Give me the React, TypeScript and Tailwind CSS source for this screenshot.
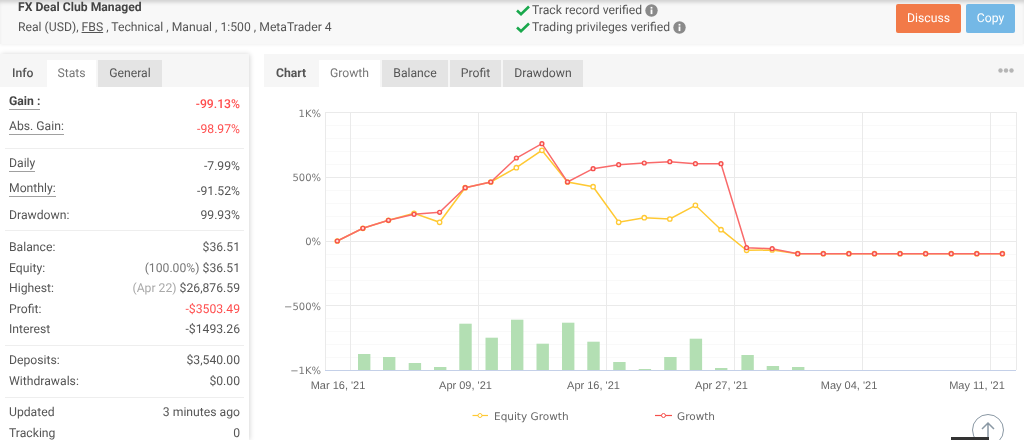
import React from "react";

const redY = [241, 228.3, 220.3, 214.3, 212.3, 187.7, 182, 158, 143.7, 182, 168.7, 164.7, 163, 161.7, 163.7, 163.7, 247.7, 248.7, 253.7, 253.7, 253.7, 253.7, 253.7, 253.7, 253.7, 253.7, 253.7];
const yelY = [241, 228.3, 220.3, 213.3, 222.3, 187.7, 182, 167.7, 150.3, 182, 186.7, 222.3, 217.7, 219, 205.3, 229.7, 250.3, 250, 253.7, 253.7, 253.7, 253.7, 253.7, 253.7, 253.7, 253.7, 253.7];
const xs = redY.map((_, i) => 337.3 + i * 25.58);
const bars: [number, number][] = [[358, 354], [383, 357], [408.7, 363], [434, 367], [459.3, 323.7], [485.5, 337.7], [511, 319.7], [536.5, 343.7], [562, 322.7], [587.3, 341.7], [613.2, 362], [638.7, 369], [664.2, 357], [689.7, 338.7], [715, 368], [741.4, 355], [766.7, 366], [792, 367]];
const verticals = [325.5, 350.5, 478.5, 606.5, 734.5, 862.5, 990.5, 1016.5];
const majors = [112.5, 177.5, 241.5, 305.5];
const minors = [125, 138, 151, 164, 190, 203, 216, 229, 254, 267, 280, 293, 318, 331, 344, 357];
const xLabels: [string, number][] = [["Mar 16, '21", 338], ["Apr 09, '21", 465.5], ["Apr 16, '21", 593.5], ["Apr 27, '21", 721.5], ["May 04, '21", 849], ["May 11, '21", 977]];
const yLabels: [string, number][] = [["1K%", 116.5], ["500%", 181], ["0%", 245], ["−500%", 309.5], ["−1K%", 374]];

function pts(ys: number[]) {
  return ys.map((y, i) => `${xs[i].toFixed(1)},${y}`).join(" ");
}

function Chart() {
  const axis = { fontFamily: "'Liberation Sans', Arial, sans-serif", fontSize: 11, fill: "#666" };
  const yAxis = { fontFamily: "'DejaVu Sans', sans-serif", fontSize: 10, fill: "#777" };
  const legend = { fontFamily: "'DejaVu Sans', sans-serif", fontSize: 10.5, fill: "#666" };
  return (
    <svg width="760" height="353" viewBox="264 87 760 353" className="block">
      {minors.map((y) => (
        <line key={y} x1="325" x2="1016" y1={y + 0.5} y2={y + 0.5} stroke="#f9f9f9" />
      ))}
      {majors.map((y) => (
        <line key={y} x1="325" x2="1016" y1={y} y2={y} stroke="#eaeaea" />
      ))}
      {verticals.map((x) => (
        <line key={x} x1={x} x2={x} y1="112" y2="370" stroke="#eaeaea" />
      ))}
      {bars.map(([x, top]) => (
        <rect key={x} x={x} y={top} width="12.4" height={370 - top} fill="#b3dfb3" />
      ))}
      <line x1="325" x2="1016" y1="370.5" y2="370.5" stroke="#c4d0e8" />
      <polyline points={pts(yelY)} fill="none" stroke="#ffc933" strokeWidth="1.5" />
      {yelY.map((y, i) => (
        <circle key={i} cx={xs[i]} cy={y} r="2.2" fill="#fff" stroke="#ffc933" strokeWidth="1.3" />
      ))}
      <polyline points={pts(redY)} fill="none" stroke="#f96a6a" strokeWidth="1.5" />
      {redY.map((y, i) => (
        <circle key={i} cx={xs[i]} cy={y} r="1.9" fill="#fdd" stroke="#f6504c" strokeWidth="1.4" />
      ))}
      <g style={yAxis} textAnchor="end">
        {yLabels.map(([t, y]) => (
          <text key={t} x="321" y={y}>{t}</text>
        ))}
      </g>
      <g style={axis} textAnchor="middle">
        {xLabels.map(([t, x]) => (
          <text key={t} x={x} y="389">{t}</text>
        ))}
      </g>
      <line x1="472.5" x2="488" y1="415.5" y2="415.5" stroke="#ffc933" strokeWidth="1.2" />
      <circle cx="480" cy="415.5" r="2" fill="#fff" stroke="#ffc933" />
      <text x="494" y="419.5" style={legend}>Equity Growth</text>
      <line x1="655" x2="672" y1="415.5" y2="415.5" stroke="#f6504c" strokeWidth="1.2" />
      <circle cx="663.5" cy="415.5" r="2" fill="#fff" stroke="#f6504c" />
      <text x="677" y="419.5" style={legend}>Growth</text>
    </svg>
  );
}

type RowProps = { label: string; value: string; note?: string; noteLight?: boolean; under?: boolean; bold?: boolean; red?: boolean; tall?: boolean };

function Row({ label, value, note, noteLight, under, bold, red, tall }: RowProps) {
  return (
    <div className={`flex justify-between items-center pl-[9px] pr-[9px] ${tall ? "h-[25px]" : "h-[20.4px]"}`}>
      <span className={`${under ? "border-b border-[#a0a0a0] leading-[15px] mb-[4px]" : ""} ${bold ? "font-bold text-[#444]" : ""}`}>{label}</span>
      <span className={`${red ? "text-[#ff4d4d]" : ""} ${bold ? "font-medium text-[#ff3d3d]" : ""}`}>
        {note && <span className={noteLight ? "text-[#aaa]" : "text-[#777]"}>{note} </span>}
        {value}
      </span>
    </div>
  );
}

function Tab({ children, active, w }: { children: React.ReactNode; active?: boolean; w: string }) {
  return (
    <div className={`h-[27px] ${w} justify-center flex items-center mr-[2px] ${active ? "bg-white text-[#777]" : "bg-[#e4e4e4] text-[#555]"}`}>{children}</div>
  );
}

function Info() {
  return (
    <svg width="13" height="13" viewBox="0 0 13 13" className="ml-[3px]">
      <circle cx="6.5" cy="6.5" r="6.2" fill="#8a8a8a" />
      <rect x="5.6" y="5.5" width="1.8" height="4.6" fill="#fff" />
      <rect x="5.6" y="2.9" width="1.8" height="1.7" fill="#fff" />
    </svg>
  );
}

function Check() {
  return (
    <svg width="14" height="11" viewBox="0 0 14 11" className="mr-[2px]">
      <path d="M1 5.5 L5 9.2 L13 1.5" fill="none" stroke="#19a84c" strokeWidth="2.6" />
    </svg>
  );
}

function Divider({ before, after }: { before: string; after: string }) {
  return <div className={`mx-[5px] border-t border-[#eee] ${before} ${after}`} />;
}

export default function App() {
  return (
    <div className="w-[1024px] h-[440px] overflow-hidden bg-white text-[#555] text-[12.2px] font-['Roboto',sans-serif] relative [text-rendering:geometricPrecision] blur-[0.3px]">
      <div className="h-[44px] bg-[#f8f8f8] shadow-[inset_0_4px_4px_-2px_rgba(0,0,0,0.18),0_1px_3px_rgba(0,0,0,0.06)] flex items-start">
        <div className="ml-[18px] w-[498px]">
          <div className="font-bold text-[#444] leading-[15px]">FX Deal Club Managed</div>
          <div className="leading-[15px] mt-[5px]">
            Real (USD), <span className="underline">FBS</span> , Technical , Manual , 1:500 , MetaTrader 4
          </div>
        </div>
        <div className="w-[380px] pt-[2px]">
          <div className="flex items-center h-[17px]"><Check />Track record verified<Info /></div>
          <div className="flex items-center h-[17px]"><Check />Trading privileges verified<Info /></div>
        </div>
        <div className="flex gap-[5px] pt-[4px]">
          <div className="w-[65px] h-[29px] rounded-[2px] bg-[#f27a48] text-white flex items-center justify-center">Discuss</div>
          <div className="w-[49px] h-[29px] rounded-[2px] bg-[#74b8e6] text-white flex items-center justify-center">Copy</div>
        </div>
      </div>
      <div className="flex mt-[10px] items-start">
        <div className="w-[249px] h-[386px] shadow-[1px_0_5px_rgba(0,0,0,0.16)] rounded-t-[2px]">
          <div className="h-[33px] bg-[#f6f6f6] flex items-end">
            <div className="w-[47px] h-[27px] flex items-center pl-[12px] font-medium text-[#555]">Info</div>
            <Tab active w="w-[49px]">Stats</Tab>
            <Tab w="w-[64px]">General</Tab>
          </div>
          <div className="pt-[4.5px]">
            <Row label="Gain :" value="-99.13%" under bold red tall />
            <Row label="Abs. Gain:" value="-98.97%" under red tall />
            <Divider before="mt-[6.5px]" after="mb-[4.5px]" />
            <Row label="Daily" value="-7.99%" under tall />
            <Row label="Monthly:" value="-91.52%" under tall />
            <div className="h-[1.5px]" />
            <Row label="Drawdown:" value="99.93%" />
            <Divider before="mt-[5px]" after="mb-[6px]" />
            <Row label="Balance:" value="$36.51" />
            <Row label="Equity:" value="$36.51" note="(100.00%)" />
            <Row label="Highest:" value="$26,876.59" note="(Apr 22)" noteLight />
            <Row label="Profit:" value="-$3503.49" red />
            <Row label="Interest" value="-$1493.26" />
            <Divider before="mt-[6px]" after="mb-[4px]" />
            <Row label="Deposits:" value="$3,540.00" />
            <Row label="Withdrawals:" value="$0.00" />
            <Divider before="mt-[6px]" after="mb-[4px]" />
            <Row label="Updated" value="3 minutes ago" />
            <Row label="Tracking" value="0" />
          </div>
        </div>
        <div className="ml-[15px] w-[760px] rounded-t-[2px]">
          <div className="h-[33px] bg-[#f6f6f6] flex items-end relative">
            <div className="w-[55px] h-[27px] flex items-center pl-[12px] font-bold text-[#555]">Chart</div>
            <Tab active w="w-[61px]">Growth</Tab>
            <Tab w="w-[66px]">Balance</Tab>
            <Tab w="w-[51px]">Profit</Tab>
            <Tab w="w-[80px]">Drawdown</Tab>
            <svg width="16" height="5" viewBox="0 0 16 5" className="absolute right-[10px] top-[13.5px]">
              <circle cx="2.5" cy="2.5" r="2.2" fill="#b5b5b5" />
              <circle cx="8" cy="2.5" r="2.2" fill="#b5b5b5" />
              <circle cx="13.5" cy="2.5" r="2.2" fill="#b5b5b5" />
            </svg>
          </div>
          <Chart />
        </div>
      </div>
      <div className="absolute left-[972px] top-[414px] w-[32px] h-[32px] rounded-full border-[1.5px] border-[#8a98a4] flex items-start justify-center bg-white">
        <svg width="20" height="24" viewBox="0 0 20 24" className="mt-[5px]">
          <path d="M4 9 L10 3 L16 9 M10 3 V24" fill="none" stroke="#8a98a4" strokeWidth="1.5" />
        </svg>
      </div>
      <div className="absolute left-[951px] top-[437px] w-[38px] h-[3px] bg-[#333]" />
    </div>
  );
}
